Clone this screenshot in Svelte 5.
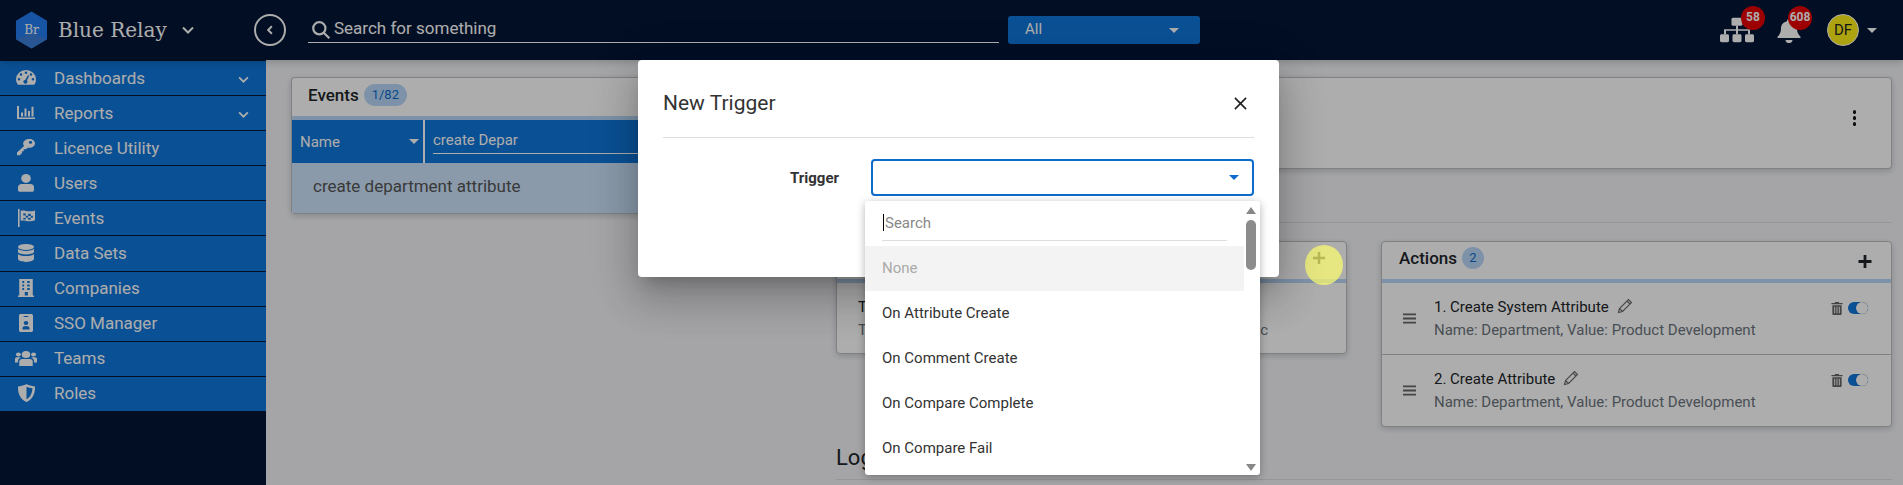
<script>
  const nav = [
    { label: 'Dashboards', icon: 'gauge', more: true },
    { label: 'Reports', icon: 'chart', more: true },
    { label: 'Licence Utility', icon: 'key' },
    { label: 'Users', icon: 'user' },
    { label: 'Events', icon: 'flag' },
    { label: 'Data Sets', icon: 'db' },
    { label: 'Companies', icon: 'building' },
    { label: 'SSO Manager', icon: 'badge' },
    { label: 'Teams', icon: 'team' },
    { label: 'Roles', icon: 'shield' }
  ];

  const actions = [
    { title: '1. Create System Attribute', detail: 'Name: Department, Value: Product Development' },
    { title: '2. Create Attribute', detail: 'Name: Department, Value: Product Development' }
  ];

  const options = ['On Attribute Create', 'On Comment Create', 'On Compare Complete', 'On Compare Fail'];
</script>

<div class="page">
  <header class="topbar">
    <div class="brand">
      <svg class="logo" viewBox="0 0 34 38" width="33" height="38">
        <path d="M17 0 33 9.500 33 28.500 17 38 1 28.500 1 9.500Z" fill="#237df0" />
        <path d="M1 28.500 17 22 33 28.500 17 38Z" fill="#3a7fd8" />
        <text x="17" y="23" text-anchor="middle" class="logo-text">Br</text>
      </svg>
      <span class="brand-name">Blue Relay</span>
      <svg class="chev brand-chev" viewBox="0 0 12 8" width="12" height="8"><path d="M1 1.500 6 6.500 11 1.500" /></svg>
    </div>
    <button class="collapse" aria-label="Collapse">
      <svg viewBox="0 0 8 12" width="6" height="10"><path d="M6.500 1 1.500 6 6.500 11" /></svg>
    </button>
    <div class="search">
      <svg viewBox="0 0 18 18" width="20" height="20"><circle cx="7.500" cy="7.500" r="5.500" /><path d="M11.500 11.500 16.500 16.500" /></svg>
      <span>Search for something</span>
    </div>
    <div class="scope">
      <span>All</span>
      <i class="caret"></i>
    </div>
    <div class="top-right">
      <div class="tool tool-net">
        <svg viewBox="0 0 34 30" width="34" height="26" preserveAspectRatio="none" fill="#fff">
          <rect x="11.500" y="1" width="11" height="9" rx="1.500" />
          <rect x="0" y="20" width="9" height="9" rx="1.500" />
          <rect x="12.500" y="20" width="9" height="9" rx="1.500" />
          <rect x="25" y="20" width="9" height="9" rx="1.500" />
          <path d="M16 10h2v4h12v6h-2v-4H18v4h-2v-4H6v4H4v-6h12z" />
        </svg>
        <span class="badge">58</span>
      </div>
      <div class="tool tool-bell">
        <svg viewBox="0 0 24 28" width="24" height="25" preserveAspectRatio="none" fill="#fff">
          <path d="M12 1c1 0 2 .8 2 2v.6c3.800.9 6 4 6 8 0 5 1.500 7 3.500 9.400v1.500H.5V21C2.500 18.600 4 16.600 4 11.600c0-4 2.200-7.100 6-8V3c0-1.200 1-2 2-2z" />
          <path d="M8.500 24.500h7c0 2-1.500 3.500-3.500 3.500s-3.500-1.500-3.500-3.500z" />
        </svg>
        <span class="badge">608</span>
      </div>
      <div class="avatar">DF</div>
      <i class="caret user-caret"></i>
    </div>
  </header>

  <div class="body">
    <nav class="side">
      <ul>
        {#each nav as item}
          <li>
            <span class="nav-icon">
              {#if item.icon === 'gauge'}
                <svg viewBox="0 0 20 16" width="20" height="15" preserveAspectRatio="none" fill="#fff"><path fill-rule="evenodd" d="M10 0a10 10 0 0 1 10 10c0 2.200-.7 4.200-1.900 5.800H1.900A9.900 9.900 0 0 1 0 10 10 10 0 0 1 10 0zM5 3.500a1.300 1.300 0 1 0 0 2.600 1.300 1.300 0 0 0 0-2.600zM3 8.500a1.300 1.300 0 1 0 0 2.600 1.300 1.300 0 0 0 0-2.600zm14 0a1.300 1.300 0 1 0 0 2.600 1.300 1.300 0 0 0 0-2.600zM15 3.500a1.300 1.300 0 1 0 0 2.600 1.300 1.300 0 0 0 0-2.600zM10 1.700a1.300 1.300 0 1 0 0 2.600 1.300 1.300 0 0 0 0-2.600zM12 5.500l-2.800 5.100a2 2 0 1 0 1.700.7L13.200 6z" /></svg>
              {:else if item.icon === 'chart'}
                <svg viewBox="0 0 18 16" width="18" height="13" preserveAspectRatio="none" fill="#fff"><path d="M0 0h2v14h16v2H0z" /><path d="M4 8h2v5H4zM7.500 3h2v10h-2zM11 6h2v7h-2zM14.500 1h2v12h-2z" /></svg>
              {:else if item.icon === 'key'}
                <svg viewBox="0 0 16 20" width="18" height="18" preserveAspectRatio="none" fill="#fff"><path fill-rule="evenodd" d="M11 0c2.800 0 5 2.200 5 4.800 0 2.800-2.200 5-5 5-.5 0-1 0-1.400-.2L8 11.500H6v2H4.500v2l-2 2.500H0v-3l6.300-7.300A5 5 0 0 1 11 0zm1 2.300a1.500 1.500 0 1 0 0 3 1.500 1.500 0 0 0 0-3z" /></svg>
              {:else if item.icon === 'user'}
                <svg viewBox="0 0 14 17" width="16" height="18" preserveAspectRatio="none" fill="#fff"><circle cx="7" cy="4.200" r="4.200" /><path d="M3 9.500h8c1.800 0 3 1.300 3 3V15c0 1-.8 1.800-1.800 1.800H1.800C.8 16.800 0 16 0 15v-2.500c0-1.700 1.300-3 3-3z" /></svg>
              {:else if item.icon === 'flag'}
                <svg viewBox="0 0 16 19" width="17" height="18" preserveAspectRatio="none" fill="#fff"><path d="M0 0h1.500v19H0z" /><path fill-rule="evenodd" d="M2.500 2C6 .5 9 4 16 1.500V12c-6 2.500-10-1-13.500.5zM5 4.500v2.300h2.300V4.700zm4.600.5v2.300H12V5zM7.300 7v2.300h2.300V7zM5 9.200v2l2.300-.2V9zm4.600.2v2H12V9.200zM12 7v2.200h2V7z" /></svg>
              {:else if item.icon === 'db'}
                <svg viewBox="0 0 14 17" width="16" height="18" preserveAspectRatio="none" fill="#fff"><ellipse cx="7" cy="2.800" rx="7" ry="2.800" /><path d="M0 4.600c1 1.300 3.600 2 7 2s6-.7 7-2v3.200c-1 1.300-3.600 2-7 2s-6-.7-7-2zM0 9.400c1 1.300 3.600 2 7 2s6-.7 7-2V14c0 1.600-3.100 3-7 3s-7-1.400-7-3z" /></svg>
              {:else if item.icon === 'building'}
                <svg viewBox="0 0 13 18" width="16" height="18" preserveAspectRatio="none" fill="#fff"><path fill-rule="evenodd" d="M1 0h11v16.500h1V18H0v-1.500h1zm2.500 2v2h1.500V2zm4 0v2h2V2zm-4 3.500v2h1.500v-2zm4 0v2h2v-2zm-4 3.500v2h1.500V9zm4 0v2h2V9zM5.500 13v3.500h2.500V13z" /></svg>
              {:else if item.icon === 'badge'}
                <svg viewBox="0 0 12 18" width="14" height="18" preserveAspectRatio="none" fill="#fff"><path fill-rule="evenodd" d="M1.500 0h9C11.300 0 12 .7 12 1.500v15c0 .8-.7 1.500-1.500 1.500h-9C.7 18 0 17.300 0 16.500v-15C0 .7.700 0 1.500 0zM4 2v1h4V2zm2 5a2 2 0 1 0 0 4 2 2 0 0 0 0-4zm-3 7v1.500h6V14c0-1.200-1.300-2-3-2s-3 .8-3 2z" /></svg>
              {:else if item.icon === 'team'}
                <svg viewBox="0 0 18 15" width="22" height="15" preserveAspectRatio="none" fill="#fff"><circle cx="9" cy="3.500" r="3.500" /><circle cx="2.800" cy="3.600" r="2" /><circle cx="15.200" cy="3.600" r="2" /><path d="M5.800 8h6.400c1.300 0 2.300 1 2.300 2.300V15h-11v-4.700C3.500 9 4.500 8 5.800 8zM0 8c0-1 .7-1.700 1.700-1.700h2c.4 0 .8.100 1 .4C3.200 7.200 2.500 8.400 2.500 10v1.500H0zM18 8c0-1-.7-1.700-1.700-1.700h-2c-.4 0-.8.100-1 .4 1.500.5 2.200 1.700 2.200 3.300v1.500H18z" /></svg>
              {:else}
                <svg viewBox="0 0 14 17" width="17" height="18" preserveAspectRatio="none" fill="#fff"><path fill-rule="evenodd" d="M7 0c1 .7 3.500 1.900 7 2.300.2 6.400-1.900 12.300-7 14.700C1.900 14.600-.2 8.700 0 2.300 3.500 1.900 6 .7 7 0zm0 2.500v12c3.100-1.800 4.700-6 4.900-10.500C10 3.700 8.300 3.100 7 2.500z" /></svg>
              {/if}
            </span>
            <span class="nav-label">{item.label}</span>
            {#if item.more}
              <svg class="chev nav-chev" viewBox="0 0 12 8" width="11" height="7"><path d="M1 1.500 6 6.500 11 1.500" /></svg>
            {/if}
          </li>
        {/each}
      </ul>
    </nav>

    <main class="content">
      <div class="top-row">
        <section class="card events">
          <div class="events-head">
            <h3>Events</h3>
            <span class="pill">1/82</span>
          </div>
          <div class="filter">
            <div class="filter-by">Name <i class="caret"></i></div>
            <div class="filter-input"><span>create Depar</span></div>
          </div>
          <div class="event-row">create department attribute</div>
        </section>
        <section class="card detail">
          <span class="dots"><i></i><i></i><i></i></span>
        </section>
      </div>

      <div class="rule"></div>

      <div class="lower">
        <section class="card triggers">
          <div class="card-head">
            <svg class="plus" viewBox="0 0 14 14" width="12" height="12"><path d="M5.500 0h3v5.500H14v3H8.500V14h-3V8.500H0v-3h5.500z" /></svg>
          </div>
          <div class="trigger-row">
            <div>T</div>
            <div class="trigger-sub"><span>T</span><span>ic</span></div>
          </div>
        </section>

        <section class="card actions">
          <div class="card-head">
            <h3>Actions</h3>
            <span class="pill round">2</span>
            <svg class="plus" viewBox="0 0 14 14" width="14" height="13"><path d="M5.500 0h3v5.500H14v3H8.500V14h-3V8.500H0v-3h5.500z" /></svg>
          </div>
          {#each actions as action}
            <div class="action">
              <svg class="drag" viewBox="0 0 14 11" width="13" height="11"><path d="M0 0h14v2H0zM0 4.500h14v2H0zM0 9h14v2H0z" /></svg>
              <div class="action-text">
                <div class="action-title">
                  {action.title}
                  <svg viewBox="0 0 16 16" width="16" height="16" class="pen"><path d="M1.500 14.500 2.500 10.500 11.500 1.500 14.500 4.500 5.500 13.500ZM10 3 13 6M2.500 10.500 5.500 13.500" /></svg>
                </div>
                <div class="action-detail">{action.detail}</div>
              </div>
              <div class="action-tools">
                <svg viewBox="0 0 12 14" width="12" height="13" fill="#666"><path fill-rule="evenodd" d="M4 0h4l.5 1H12v1.500H0V1h3.500zM1 3.500h10V13c0 .6-.4 1-1 1H2c-.6 0-1-.4-1-1zM3 5v7h1V5zm2.500 0v7h1V5zM8 5v7h1V5z" /></svg>
                <span class="toggle"><i></i></span>
              </div>
            </div>
          {/each}
        </section>
      </div>

      <div class="logs">Logs</div>
    </main>
  </div>

  <div class="overlay"></div>

  <div class="click-dot"></div>

  <div class="modal" role="dialog">
    <div class="modal-head">
      <h2>New Trigger</h2>
      <svg viewBox="0 0 14 14" width="13" height="13" class="close"><path d="M1 1 13 13M13 1 1 13" /></svg>
    </div>
    <div class="modal-field">
      <label for="trigger">Trigger</label>
      <div id="trigger" class="select"><i class="caret"></i></div>
    </div>
  </div>

  <div class="dropdown">
    <div class="drop-main">
      <div class="drop-search"><span class="cursor"></span><span>Search</span></div>
      <div class="option none">None</div>
      {#each options as option}
        <div class="option">{option}</div>
      {/each}
    </div>
    <div class="scrollbar">
      <i class="arrow up"></i>
      <span class="thumb"></span>
      <i class="arrow down"></i>
    </div>
  </div>
</div>

<style>
  :global(body) {
    margin: 0;
    font-family: Roboto, "Liberation Sans", sans-serif;
  }

  .page {
    position: relative;
    height: 485px;
    overflow: hidden;
    background: #f3f4f8;
    color: #212529;
    font-size: 15px;
  }

  .caret {
    display: inline-block;
    width: 0;
    height: 0;
    border-left: 5px solid transparent;
    border-right: 5px solid transparent;
    border-top: 5px solid #fff;
  }

  .chev path {
    fill: none;
    stroke: #fff;
    stroke-width: 2;
  }

  /* top bar */
  .topbar {
    position: relative;
    z-index: 1;
    height: 60px;
    background: #041635;
    display: flex;
    align-items: center;
    color: #fff;
    box-shadow: 0 2px 8px rgba(0, 0, 0, 0.2);
  }

  .brand {
    width: 254px;
    display: flex;
    align-items: center;
    padding-left: 15px;
    box-sizing: border-box;
    flex: none;
  }

  .logo-text {
    font-family: "DejaVu Serif", "Liberation Serif", serif;
    font-size: 12.500px;
    fill: #fff;
  }

  .brand-name {
    font-family: "DejaVu Serif", "Liberation Serif", serif;
    font-size: 20px;
    margin-left: 10px;
    white-space: nowrap;
  }

  .brand-chev {
    margin-left: 15px;
  }

  .collapse {
    width: 32px;
    height: 32px;
    margin-right: 22px;
    border: 2.500px solid #fff;
    border-radius: 50%;
    background: none;
    padding: 0;
    display: flex;
    align-items: center;
    justify-content: center;
    flex: none;
  }

  .collapse path {
    fill: none;
    stroke: #fff;
    stroke-width: 2.500;
  }

  .search {
    width: 691px;
    height: 29px;
    align-self: flex-start;
    margin-top: 14px;
    box-sizing: border-box;
    border-bottom: 1px solid #fff;
    display: flex;
    align-items: center;
    gap: 3px;
    padding-left: 3px;
    font-size: 17px;
    flex: none;
  }

  .search svg {
    fill: none;
    stroke: #fff;
    stroke-width: 2;
    margin-top: 3px;
  }

  .scope {
    width: 192px;
    height: 28px;
    margin-left: 9px;
    background: #1076da;
    border-radius: 3px;
    display: flex;
    align-items: center;
    justify-content: space-between;
    padding: 0 21px 0 17px;
    box-sizing: border-box;
    flex: none;
  }

  .scope span {
    padding-bottom: 3px;
  }

  .top-right {
    margin-left: auto;
    display: flex;
    align-items: center;
    padding-right: 26px;
  }

  .tool {
    position: relative;
    display: flex;
  }

  .tool-net {
    margin-right: 23px;
  }

  .tool-bell {
    margin-right: 26px;
  }

  .badge {
    position: absolute;
    top: -11px;
    right: -11px;
    width: 24px;
    height: 24px;
    border-radius: 50%;
    background: #e60000;
    font-size: 12px;
    font-weight: 700;
    line-height: 22px;
    text-align: center;
    color: #fff;
  }

  .tool-bell .badge {
    top: -12px;
  }

  .avatar {
    width: 32px;
    height: 32px;
    box-sizing: border-box;
    border: 1px solid #fff;
    border-radius: 50%;
    background: #fff01a;
    color: #222;
    font-size: 15px;
    line-height: 30px;
    text-align: center;
  }

  .user-caret {
    margin-left: 8px;
  }

  .body {
    display: flex;
    height: 425px;
  }

  /* sidebar */
  .side {
    width: 266px;
    flex: none;
    background: #041635;
  }

  .side ul {
    list-style: none;
    margin: 0;
    padding: 1px 0 0;
  }

  .side li {
    height: 33.100px;
    padding: 0 17px 1px 0;
    background: #1076da;
    border-bottom: 1.100px solid #041635;
    display: flex;
    align-items: center;
    font-size: 17px;
    color: #fff;
  }

  .side li:last-child {
    border-bottom: 0;
  }

  .nav-icon {
    width: 34px;
    padding-left: 9px;
    margin-right: 11px;
    flex: none;
    display: flex;
    justify-content: center;
  }

  .nav-chev {
    margin-left: auto;
    margin-top: 3px;
  }

  /* main area */
  .content {
    flex: 1;
    min-width: 0;
    padding: 17px 11px 0 25px;
    box-sizing: border-box;
  }

  .card {
    background: #fff;
    border: 1px solid #bfbfbf;
    border-radius: 4px;
    box-shadow: 0 2px 6px rgba(0, 0, 0, 0.18);
    box-sizing: border-box;
  }

  h3 {
    margin: 0;
    font-size: 17px;
    font-weight: 500;
  }

  .pill {
    display: inline-block;
    background: #b9d8f8;
    color: #0d6ccb;
    font-size: 13px;
    border-radius: 11px;
    line-height: 22px;
    padding: 0 8px;
    margin-left: 5px;
  }

  .pill.round {
    padding: 0;
    width: 22px;
    text-align: center;
  }

  .top-row {
    display: flex;
    align-items: flex-start;
  }

  .events {
    width: 380px;
    flex: none;
    border-right: 0;
    border-radius: 4px 0 0 4px;
  }

  .events-head {
    height: 42px;
    border-bottom: 4px solid #b9d8f8;
    box-sizing: border-box;
    display: flex;
    align-items: center;
    padding: 0 0 4px 16px;
  }

  .filter {
    height: 43px;
    background: #1076da;
    display: flex;
    color: #fff;
  }

  .filter-by {
    width: 131px;
    box-sizing: border-box;
    padding: 0 4px 0 8px;
    display: flex;
    align-items: center;
    justify-content: space-between;
    flex: none;
  }

  .filter-input {
    flex: 1;
    border-left: 2px solid #fff;
    padding-left: 8px;
    display: flex;
    align-items: flex-start;
  }

  .filter-input span {
    flex: 1;
    height: 33px;
    line-height: 40px;
    border-bottom: 1px solid #fff;
  }

  .event-row {
    height: 50px;
    background: #cce4fc;
    padding-left: 21px;
    line-height: 46px;
    font-size: 17px;
    color: #555;
  }

  .detail {
    flex: 1;
    height: 92px;
    border-left: 0;
    border-radius: 0 4px 4px 0;
    display: flex;
    justify-content: flex-end;
    padding: 32px 35px 0 0;
  }

  .dots {
    display: flex;
    flex-direction: column;
    gap: 2.500px;
  }

  .dots i {
    width: 3.500px;
    height: 3.500px;
    border-radius: 50%;
    background: #111;
  }

  .rule {
    height: 1px;
    background: #ddd;
    margin: 8px 0 0 545px;
  }

  .lower {
    display: flex;
    align-items: flex-start;
    margin: 18px 0 0 545px;
    gap: 34px;
  }

  .card-head {
    height: 41px;
    border-bottom: 4px solid #b9d8f8;
    display: flex;
    align-items: center;
    padding: 0 19px 5px 17px;
    box-sizing: border-box;
  }

  .card-head .plus {
    margin-left: auto;
    margin-top: 6px;
    fill: #212529;
  }

  .triggers {
    width: 511px;
    height: 113px;
    flex: none;
  }

  .triggers .plus {
    margin-right: 2px;
    margin-top: 0;
  }

  .trigger-row {
    padding: 14px 78px 0 21px;
    line-height: 20px;
  }

  .trigger-sub {
    display: flex;
    justify-content: space-between;
    margin-top: 3px;
    color: #6c757d;
  }

  .logs {
    margin: 18px 0 0 545px;
    height: 34px;
    font-size: 22px;
    line-height: 26px;
    border-bottom: 1px solid #ddd;
  }

  .actions {
    flex: 1;
    min-width: 0;
  }

  .action {
    height: 72px;
    display: flex;
    border-bottom: 1px solid #bfbfbf;
    padding: 14px 23px 0 21px;
    box-sizing: border-box;
  }

  .action:last-child {
    height: 71px;
    border-bottom: 0;
  }

  .drag {
    fill: #666;
    margin: 16px 18px 0 0;
    flex: none;
  }

  .action-title {
    line-height: 20px;
    display: flex;
    align-items: center;
    gap: 8px;
    white-space: nowrap;
  }

  .pen {
    fill: none;
    stroke: #666;
    stroke-width: 1.100;
    margin-top: -3px;
  }

  .action-detail {
    color: #6c757d;
    margin-top: 3px;
    line-height: 20px;
    white-space: nowrap;
  }

  .action-tools {
    margin-left: auto;
    display: flex;
    align-items: flex-start;
    gap: 5px;
    padding-top: 5px;
  }

  .toggle {
    position: relative;
    display: block;
    width: 20px;
    height: 12px;
    background: #1076da;
    border-radius: 6px;
  }

  .toggle i {
    position: absolute;
    right: 0;
    top: 0;
    width: 12px;
    height: 12px;
    border-radius: 50%;
    background: #fff;
    box-shadow: 0 0 1px rgba(0, 0, 0, 0.4);
  }

  /* dialog layers */
  .overlay {
    position: absolute;
    z-index: 2;
    inset: 0;
    background: rgba(0, 0, 0, 0.32);
  }

  .click-dot {
    position: absolute;
    z-index: 2;
    left: 1305px;
    top: 245px;
    width: 38px;
    height: 40px;
    border-radius: 50%;
    background: rgba(255, 255, 110, 0.7);
  }

  .modal {
    position: absolute;
    z-index: 3;
    left: 638px;
    top: 60px;
    width: 641px;
    height: 217px;
    background: #fff;
    border-radius: 4px;
    padding: 0 25px;
    box-sizing: border-box;
    box-shadow: 0 11px 15px -7px rgba(0, 0, 0, 0.2), 0 24px 38px 3px rgba(0, 0, 0, 0.14), 0 9px 46px 8px rgba(0, 0, 0, 0.12);
  }

  .modal-head {
    height: 68px;
    padding: 9px 7px 0 0;
    border-bottom: 1px solid #ddd;
    display: flex;
    align-items: center;
    justify-content: space-between;
  }

  .modal-head h2 {
    margin: 0;
    font-size: 21px;
    font-weight: 400;
    color: #333;
  }

  .close path {
    fill: none;
    stroke: #222;
    stroke-width: 1.800;
  }

  .modal-field {
    display: flex;
    align-items: center;
    margin-top: 21px;
  }

  label {
    width: 176px;
    flex: none;
    padding-top: 1px;
    text-align: right;
    font-weight: 700;
    margin-right: 32px;
    color: #333;
  }

  .select {
    flex: 1;
    height: 37px;
    border: 2px solid #0d6ccb;
    border-radius: 4px;
    box-sizing: border-box;
    display: flex;
    align-items: center;
    justify-content: flex-end;
    padding-right: 13px;
  }

  .select .caret {
    border-top-color: #0d6ccb;
  }

  .dropdown {
    position: absolute;
    z-index: 4;
    left: 865px;
    top: 201px;
    width: 395px;
    height: 274px;
    background: #fff;
    border-radius: 3px;
    display: flex;
    overflow: hidden;
    box-shadow: 0 2px 8px rgba(0, 0, 0, 0.3);
  }

  .drop-main {
    flex: 1;
    min-width: 0;
  }

  .drop-search {
    height: 35px;
    margin: 0 17px 5px;
    padding-top: 4px;
    border-bottom: 1px solid #ddd;
    display: flex;
    align-items: center;
    color: #888;
  }

  .cursor {
    width: 1px;
    height: 17px;
    background: #000;
    margin: 0 1px;
  }

  .option {
    height: 45px;
    line-height: 45px;
    padding-left: 17px;
    color: #333;
  }

  .option.none {
    background: #f3f3f3;
    color: #aaa;
  }

  .scrollbar {
    width: 16px;
    flex: none;
    position: relative;
  }

  .arrow {
    position: absolute;
    left: 2px;
    width: 0;
    height: 0;
    border-left: 5px solid transparent;
    border-right: 5px solid transparent;
  }

  .arrow.up {
    top: 6px;
    border-bottom: 7px solid #888;
  }

  .arrow.down {
    bottom: 4px;
    border-top: 7px solid #888;
  }

  .thumb {
    position: absolute;
    left: 2px;
    top: 19px;
    width: 10px;
    height: 50px;
    border-radius: 5px;
    background: #8c8c8c;
  }
</style>
